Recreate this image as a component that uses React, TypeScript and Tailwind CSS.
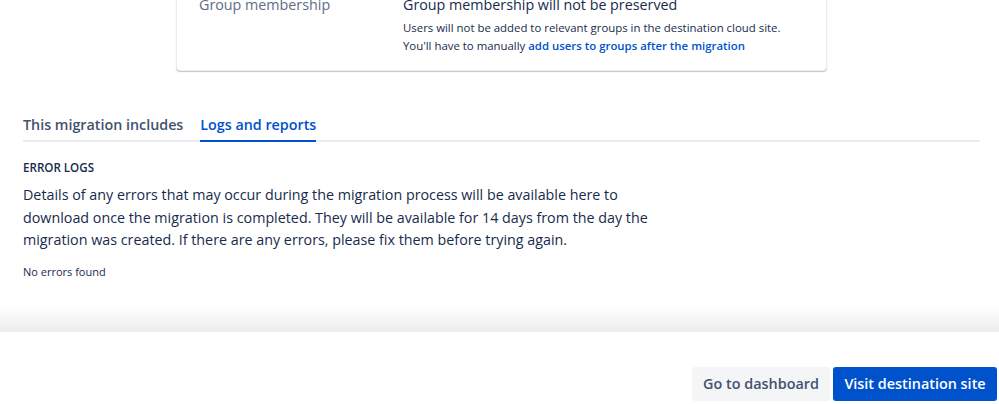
import React from "react";

export default function App() {
  return (
    <div
      className="relative w-full h-[404px] overflow-hidden bg-white text-[#172b4d]"
      style={{ fontFamily: '"Open Sans", "Noto Sans", sans-serif' }}
    >
      {/* Card */}
      <div className="ml-[176px] mt-[-41px] w-[651px] rounded-b-[4px] border border-[#ebecf0] bg-white pb-[15px] shadow-[0_1px_1px_rgba(9,30,66,0.25)]">
        <div className="grid grid-cols-[204px_1fr] pl-[22px] pt-[20px]">
          <div className="pt-[13px] text-[14.3px] leading-[24px] text-[#5e6c84]">Group membership</div>
          <div className="pt-[13px]">
            <div className="text-[14.3px] leading-[24px] text-[#172b4d]">Group membership will not be preserved</div>
            <div className="mt-[2px] text-[11.4px] leading-[18px] text-[#172b4d]">
              Users will not be added to relevant groups in the destination cloud site.
            </div>
            <div className="text-[11.4px] leading-[18px] text-[#172b4d]">
              You'll have to manually{" "}
              <a className="font-semibold text-[#0052cc]">add users to groups after the migration</a>
            </div>
          </div>
        </div>
      </div>

      {/* Tabs */}
      <div className="mx-[23px] mt-[42px] flex border-b-2 border-[#ebecf0] w-[957px]">
        <div className="mb-[-2px] pb-[3px] text-[14.3px] font-semibold leading-[24px] text-[#42526e]">
          This migration includes
        </div>
        <div className="ml-[17px] mb-[-2px] border-b-2 border-[#0052cc] pb-[3px] text-[14.3px] font-semibold leading-[24px] text-[#0052cc]">
          Logs and reports
        </div>
      </div>

      {/* Error logs */}
      <div className="px-[23px] pt-[17px]">
        <div className="text-[11.6px] font-semibold leading-[18px] text-[#172b4d]">ERROR LOGS</div>
        <p className="mt-[7px] w-[660px] text-[14.3px] leading-[22.5px] text-[#172b4d]">
          Details of any errors that may occur during the migration process will be available here to
          download once the migration is completed. They will be available for 14 days from the day the
          migration was created. If there are any errors, please fix them before trying again.
        </p>
        <div className="mt-[12px] text-[11px] leading-[16px] text-[#172b4d]">No errors found</div>
      </div>

      {/* Footer */}
      <div className="absolute left-0 right-0 top-[306px] h-[26px] bg-gradient-to-b from-white to-[#ececec]" />
      <div className="absolute left-0 right-0 top-[332px] bottom-0 flex items-start justify-end bg-white pr-[2px] pt-[35px]">
        <div className="flex gap-[3px]">
          <button className="h-[34px] w-[138px] rounded-[3px] bg-[#f4f5f7] text-[14.4px] font-semibold text-[#42526e]">
            Go to dashboard
          </button>
          <button className="h-[34px] w-[164px] rounded-[3px] bg-[#0052cc] text-[14.4px] font-semibold text-white">
            Visit destination site
          </button>
        </div>
      </div>
    </div>
  );
}
